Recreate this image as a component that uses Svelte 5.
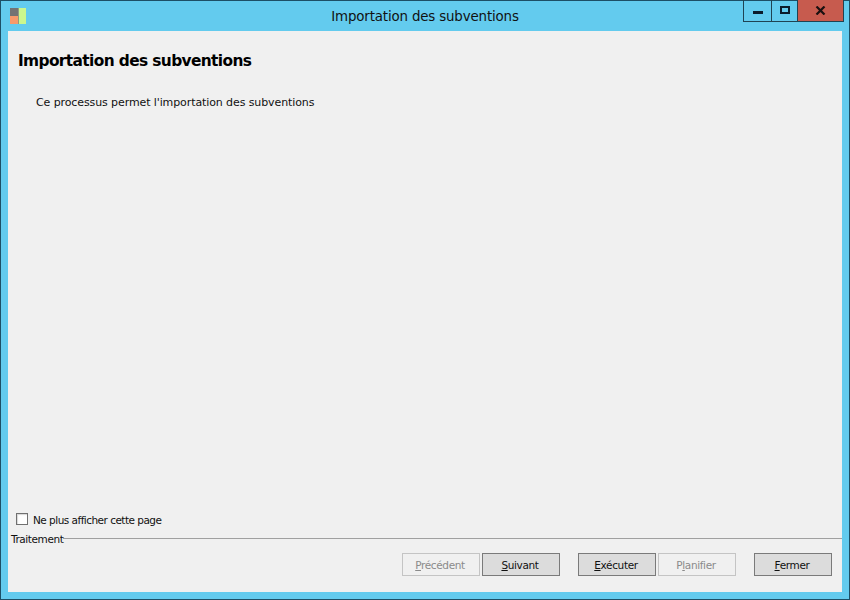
<script lang="ts">
	let hideNext = $state(false);
</script>

<div class="window">
	<header class="titlebar">
		<div class="app-icon">
			<svg width="16" height="16" viewBox="0 0 16 16">
				<rect x="0" y="0" width="8" height="8" fill="#737373" />
				<rect x="0" y="8" width="8" height="8" fill="#f79a6b" />
				<rect x="8" y="0" width="1" height="16" fill="#8f9a80" />
				<rect x="9" y="0" width="7" height="16" fill="#cbf78e" />
			</svg>
		</div>
		<div class="title">Importation des subventions</div>
		<div class="controls">
			<button class="ctl min" aria-label="Réduire"><span></span></button>
			<button class="ctl max" aria-label="Agrandir"><span></span></button>
			<button class="ctl close" aria-label="Fermer">
				<svg width="11" height="9" viewBox="0 0 11 9">
					<path d="M1.5 0.5 L9.5 8.5 M9.5 0.5 L1.5 8.5" stroke="#1a1010" stroke-width="2.2" fill="none" />
				</svg>
			</button>
		</div>
	</header>

	<main class="content">
		<div class="body">
			<h1>Importation des subventions</h1>
			<p>Ce processus permet l'importation des subventions</p>
		</div>

		<label class="check">
			<input type="checkbox" bind:checked={hideNext} />
			<span class="box"></span>
			Ne plus afficher cette page
		</label>

		<div class="group-label">
			<span>Traitement</span>
			<div class="rule"></div>
		</div>

		<div class="actions">
			<button class="btn" disabled><u>P</u>récédent</button>
			<button class="btn next"><u>S</u>uivant</button>
			<button class="btn run"><u>E</u>xécuter</button>
			<button class="btn" disabled>P<u>l</u>anifier</button>
			<button class="btn close-btn"><u>F</u>ermer</button>
		</div>
	</main>
</div>

<style>
	:global(body) {
		margin: 0;
		background: #63cbee;
	}

	.window {
		box-sizing: border-box;
		width: 850px;
		height: 600px;
		display: flex;
		flex-direction: column;
		background: #63cbee;
		border: 1px solid #1d4f66;
		padding: 0 7px 7px;
		font-family: "DejaVu Sans", Tahoma, sans-serif;
		font-size: 10.5px;
		color: #111;
	}

	.titlebar {
		position: relative;
		height: 30px;
		flex: none;
		display: flex;
		align-items: center;
		justify-content: center;
	}

	.app-icon {
		position: absolute;
		left: 2px;
		top: 7px;
		height: 16px;
	}

	.title {
		font-size: 13.4px;
		letter-spacing: -0.16px;
		color: #111;
		margin-top: 1px;
	}

	.controls {
		position: absolute;
		right: -2px;
		top: -1px;
		display: flex;
		height: 22px;
		border: 1px solid #1f4353;
		border-top: 0;
		box-sizing: border-box;
	}

	.ctl {
		box-sizing: border-box;
		padding: 0;
		border: 0;
		background: none;
		display: flex;
		align-items: center;
		justify-content: center;
		height: 100%;
	}

	.ctl.min {
		width: 28px;
		border-right: 1px solid #1f4353;
	}

	.ctl.min span {
		display: block;
		width: 10px;
		height: 3px;
		background: #0b1c2c;
		margin-top: 4px;
	}

	.ctl.max {
		width: 26px;
		border-right: 1px solid #1f4353;
	}

	.ctl.max span {
		display: block;
		box-sizing: border-box;
		width: 10px;
		height: 8px;
		border: 2px solid #0b1c2c;
		margin-bottom: 1px;
	}

	.ctl.close {
		width: 45px;
		background: #c75b4e;
	}

	.content {
		flex: 1;
		min-height: 0;
		display: flex;
		flex-direction: column;
		background: #f0f0f0;
	}

	.body {
		flex: 1;
		padding: 20px 10px 0;
	}

	h1 {
		margin: 0;
		font-size: 15.4px;
		line-height: 20px;
		font-weight: 700;
		letter-spacing: -0.62px;
		color: #000;
	}

	p {
		margin: 25px 0 0 18px;
		font-size: 11px;
		line-height: 14px;
		letter-spacing: -0.1px;
	}

	.check {
		display: flex;
		align-items: center;
		gap: 5px;
		margin-left: 8px;
		height: 16px;
		margin-top: -1px;
		font-size: 10.5px;
		letter-spacing: -0.52px;
	}

	.check input {
		position: absolute;
		opacity: 0;
		width: 0;
		height: 0;
	}

	.box {
		box-sizing: border-box;
		width: 12px;
		height: 12px;
		background: #fff;
		border: 1px solid #707070;
		box-shadow: inset 1px 1px 1px #d8d8d8;
		margin-top: -3px;
	}

	.group-label {
		display: flex;
		align-items: center;
		margin: 4px 0 0 3px;
		height: 13px;
		font-size: 10.5px;
		letter-spacing: -0.42px;
	}

	.rule {
		flex: 1;
		height: 1px;
		background: #a0a0a0;
	}

	.actions {
		display: flex;
		justify-content: flex-end;
		margin-top: 8px;
		padding: 0 10px 16px 0;
	}

	.btn {
		box-sizing: border-box;
		width: 78px;
		height: 23px;
		padding: 0 2px 0 0;
		font: inherit;
		font-size: 10.5px;
		letter-spacing: -0.36px;
		color: #111;
		background: #dcdcdc;
		border: 1px solid #7a7a7a;
		margin-left: 2px;
	}

	.btn:disabled {
		background: #f0f0f0;
		border-color: #c4c4c4;
		color: #8a8a8a;
	}

	.run {
		margin-left: 18px;
	}

	.close-btn {
		margin-left: 18px;
	}
</style>
